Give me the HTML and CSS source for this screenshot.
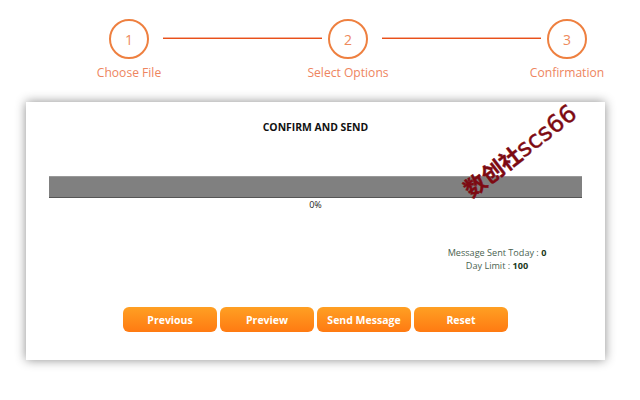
FILE: index.html
```html
<!DOCTYPE html>
<html lang="en">
<head>
  <meta charset="UTF-8" />
  <title>Confirm and Send</title>
  <link rel="stylesheet" href="styles.css">
</head>
<body>
  <div class="steps">
    <div class="step">
      <div class="circle">1</div>
      <div class="step-label">Choose File</div>
    </div>
    <div class="line"></div>
    <div class="step">
      <div class="circle">2</div>
      <div class="step-label">Select Options</div>
    </div>
    <div class="line"></div>
    <div class="step">
      <div class="circle">3</div>
      <div class="step-label">Confirmation</div>
    </div>
  </div>

  <div class="card">
    <h1>CONFIRM AND SEND</h1>
    <div class="progress"></div>
    <div class="percent">0%</div>
    <div class="stats">
      <div>Message Sent Today : <strong>0</strong></div>
      <div>Day Limit : <strong>100</strong></div>
    </div>
    <div class="buttons">
      <button class="btn">Previous</button>
      <button class="btn">Preview</button>
      <button class="btn">Send Message</button>
      <button class="btn">Reset</button>
    </div>
    <div class="watermark"><b>数创社</b>scs66</div>
  </div>
</body>
</html>
```

FILE: styles.css
```css
* { box-sizing: border-box; margin: 0; padding: 0; }
body {
  font-family: 'Open Sans', sans-serif;
  background: #fff;
  width: 640px;
  height: 400px;
  overflow: hidden;
}
.steps {
  display: flex;
  padding: 19px 0 0 109px;
  height: 102px;
}
.step {
  width: 40px;
  display: flex;
  flex-direction: column;
  align-items: center;
}
.circle {
  width: 40px;
  height: 40px;
  flex: none;
  border: 2px solid #ee8040;
  border-radius: 50%;
  color: #ee8a5c;
  font-size: 14px;
  display: flex;
  align-items: center;
  justify-content: center;
}
.step-label {
  margin-top: 5px;
  font-size: 12.1px;
  line-height: 17px;
  white-space: nowrap;
  color: #ee8560;
}
.line {
  width: 159px;
  height: 1px;
  margin: 19px 6px 0 14px;
  background: #e8501a;
  box-shadow: 0 -1px 0 rgba(232,80,26,0.45);
}
.card {
  position: relative;
  width: 579px;
  height: 258px;
  margin-left: 26px;
  padding: 18px 23px 0;
  background: #fff;
  box-shadow: 0 0 10px rgba(0,0,0,0.45);
}
h1 {
  font-size: 10.4px;
  line-height: 14px;
  font-weight: 700;
  text-align: center;
  color: #111;
}
.progress {
  height: 22px;
  margin-top: 42px;
  background: #808080;
  border-top: 1px solid #999;
  border-bottom: 1px solid #555;
}
.percent {
  font-size: 9px;
  line-height: 13px;
  text-align: center;
  color: #222;
}
.stats {
  width: 140px;
  margin: 35px 0 0 378px;
  font-size: 9.1px;
  line-height: 13px;
  text-align: center;
  color: #4a6350;
}
.stats strong {
  color: #1c3a22;
}
.buttons {
  display: flex;
  justify-content: center;
  gap: 2.5px;
  margin-top: 35px;
}
.btn {
  width: 94.5px;
  height: 25px;
  border: none;
  border-radius: 6px;
  background: linear-gradient(to bottom, #ffa023, #ff7a12);
  color: #fff;
  font-family: 'Open Sans', sans-serif;
  font-size: 10.5px;
  font-weight: 700;
}
.watermark {
  position: absolute;
  left: 427px;
  top: 35px;
  font-family: 'DejaVu Sans', 'Noto Sans CJK SC', sans-serif;
  font-size: 24px;
  line-height: 28px;
  white-space: nowrap;
  color: #7d0a12;
  -webkit-text-stroke: 0.4px #7d0a12;
  transform: rotate(-37.5deg);
}
.watermark b {
  font-size: 22px;
}
```
